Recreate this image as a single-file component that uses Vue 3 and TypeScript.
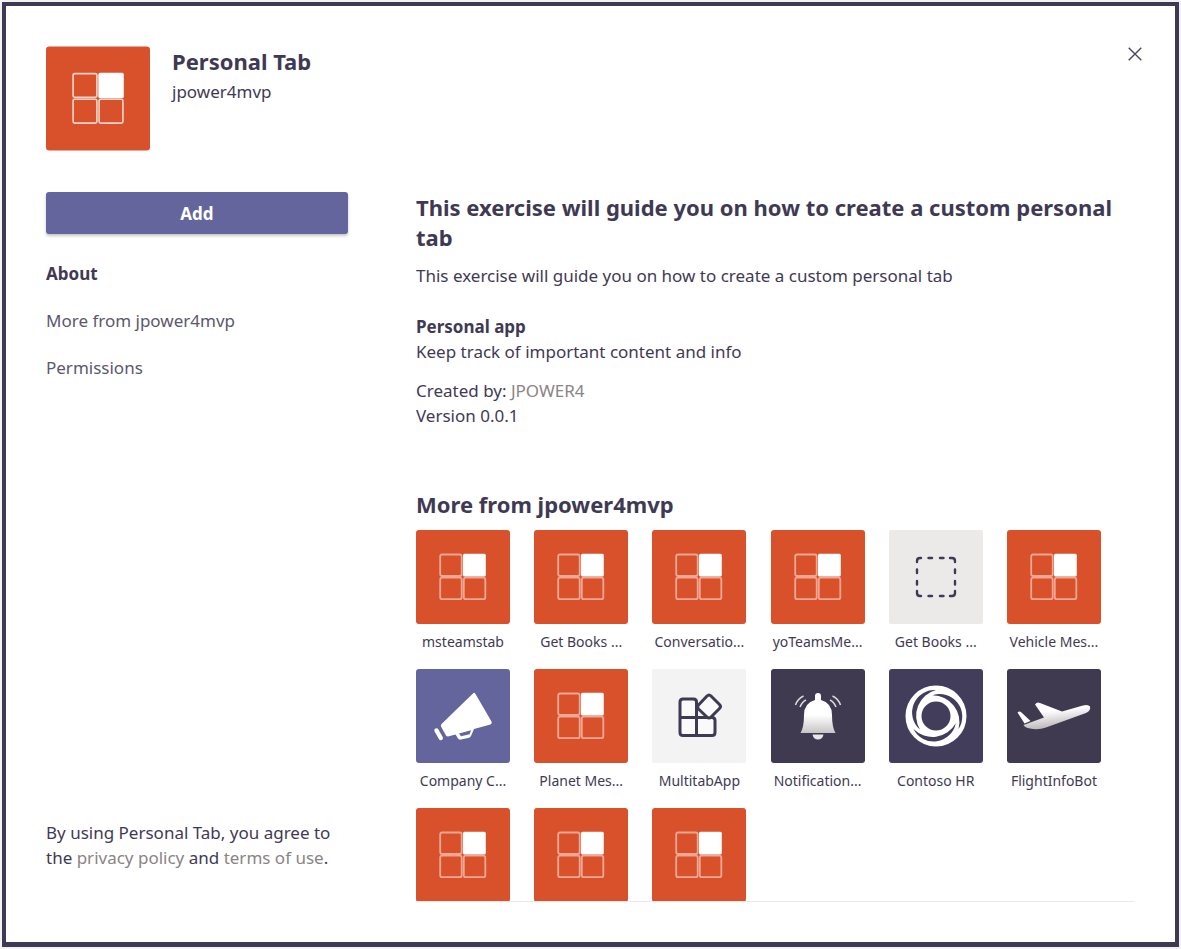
<script setup lang="ts">
type IconKind = 'tab' | 'dashed' | 'megaphone' | 'multitab' | 'bell' | 'contoso' | 'plane'

interface AppTile {
  name?: string
  icon: IconKind
}

const sections: string[] = ['About', 'More from jpower4mvp', 'Permissions']

const apps: AppTile[] = [
  { name: 'msteamstab', icon: 'tab' },
  { name: 'Get Books ...', icon: 'tab' },
  { name: 'Conversatio...', icon: 'tab' },
  { name: 'yoTeamsMe...', icon: 'tab' },
  { name: 'Get Books ...', icon: 'dashed' },
  { name: 'Vehicle Mes...', icon: 'tab' },
  { name: 'Company C...', icon: 'megaphone' },
  { name: 'Planet Mes...', icon: 'tab' },
  { name: 'MultitabApp', icon: 'multitab' },
  { name: 'Notification...', icon: 'bell' },
  { name: 'Contoso HR', icon: 'contoso' },
  { name: 'FlightInfoBot', icon: 'plane' },
  { icon: 'tab' },
  { icon: 'tab' },
  { icon: 'tab' },
]
</script>

<template>
  <main class="dialog">
    <header class="head">
      <svg class="logo" viewBox="0 0 94 94" aria-hidden="true">
        <rect width="94" height="94" rx="3" fill="#d9512a" />
        <g fill="none" stroke="#f6d3c9" stroke-width="1.5">
          <rect x="24.5" y="24.5" width="21.5" height="21.5" rx="1.5" />
          <rect x="24.5" y="47.7" width="21.5" height="21.5" rx="1.5" />
          <rect x="48" y="47.7" width="21.5" height="21.5" rx="1.5" />
        </g>
        <rect x="47.3" y="23.8" width="23" height="23" rx="1.5" fill="#fff" />
      </svg>
      <div class="title">
        <h1>Personal Tab</h1>
        <p>jpower4mvp</p>
      </div>
      <button class="close" type="button" aria-label="Close">
        <svg viewBox="0 0 14 14"><path d="M.7.7 13.3 13.3M13.3.7.7 13.3" fill="none" stroke="#4b4660" stroke-width="1.4" /></svg>
      </button>
    </header>

    <div class="body">
      <aside class="side">
        <button class="add" type="button">Add</button>
        <nav>
          <a v-for="(s, i) in sections" :key="s" href="#" :class="{ active: i === 0 }">{{ s }}</a>
        </nav>
        <p class="legal">
          By using Personal Tab, you agree to the <a href="#">privacy policy</a> and <a href="#">terms of use</a>.
        </p>
      </aside>

      <section class="content">
        <h2>This exercise will guide you on how to create a custom personal tab</h2>
        <p class="intro">This exercise will guide you on how to create a custom personal tab</p>
        <h3>Personal app</h3>
        <p>Keep track of important content and info</p>
        <p class="meta">Created by: <a href="#">JPOWER4</a></p>
        <p>Version 0.0.1</p>
        <h2 class="more">More from jpower4mvp</h2>
        <ul class="grid">
          <li v-for="(app, i) in apps" :key="i">
            <svg class="tile" viewBox="0 0 94 94" aria-hidden="true">
              <template v-if="app.icon === 'tab'">
                <rect width="94" height="94" rx="3" fill="#d9512a" />
                <g fill="none" stroke="#f0a896" stroke-width="1.8">
                  <rect x="24.2" y="24.5" width="21.5" height="21.5" rx="2" />
                  <rect x="24.2" y="47.7" width="21.5" height="21.5" rx="2" />
                  <rect x="47.8" y="47.7" width="21.5" height="21.5" rx="2" />
                </g>
                <rect x="47" y="23.8" width="22.8" height="22.8" rx="1.5" fill="#fff" />
              </template>
              <template v-else-if="app.icon === 'dashed'">
                <rect width="94" height="94" rx="2" fill="#ebeae9" />
                <g fill="none" stroke="#3f3a54" stroke-width="2.4" stroke-linecap="round">
                  <path d="M28 32v-1q0-3 3-3h1M61 28h2q3 0 3 3v1M66 61v2q0 3-3 3h-2M32 66h-1q-3 0-3-3v-2" />
                  <path d="M39.5 28h3.5M51 28h3.5M39.5 66h3.5M51 66h3.5M28 39.5v3.5M28 51v3.5M66 39.5v3.5M66 51v3.5" />
                </g>
              </template>
              <template v-else-if="app.icon === 'megaphone'">
                <rect width="94" height="94" rx="3" fill="#64659c" />
                <path d="M57.5 24q1-1 2 1L75.5 52.5q1 2-1 3L58 60l-3 7q-1 2-3 2l-7 1.500q-2 .5-3-1l-2.500-4-7.500 2q-1.500 0-2-1l-5-9q-.5-1.500.5-2.500z" fill="#fff" />
                <path d="m43 64.500 12-3.200-1.500 4-8.500 2z" fill="#64659c" />
                <path d="m20.500 61.500 4.300 7.500" stroke="#fff" stroke-width="4.400" stroke-linecap="round" />
              </template>
              <template v-else-if="app.icon === 'multitab'">
                <rect width="94" height="94" rx="2" fill="#f4f3f3" />
                <g fill="#fafafa" stroke="#3f3a54" stroke-width="3" stroke-linejoin="round">
                  <path d="M44.5 48.5V33q0-3-3-3H31q-3 0-3 3v30.500q0 3 3 3h29q3 0 3-3v-12q0-3-3-3H28M44.5 48.5v18" />
                  <path d="m46.500 36 8.500-9q2-2 4 0l8.500 8.500q2 2 0 4L59 48q-2 2-4 0l-8.500-8q-2-2 0-4z" />
                </g>
              </template>
              <template v-else-if="app.icon === 'bell'">
                <defs>
                  <linearGradient id="bell-shade" x1="0" y1="0" x2="0" y2="1">
                    <stop offset=".55" stop-color="#fff" />
                    <stop offset="1" stop-color="#c9c3c4" />
                  </linearGradient>
                </defs>
                <rect width="94" height="94" rx="3" fill="#3f3a50" />
                <path d="M44 31v-4q0-3 3-3t3 3v4q11 3 11 15 0 12 3.500 18h-35Q33 58 33 46q0-12 11-15z" fill="url(#bell-shade)" />
                <path d="M41.500 65.500h11q-1 5-5.500 5t-5.500-5z" fill="#e8e6e8" />
                <path d="M24.500 36q2-6 8-9M29 38q2-5 6-7M69.500 36q-2-6-8-9M65 38q-2-5-6-7" fill="none" stroke="#dcdae0" stroke-width="1.500" />
              </template>
              <template v-else-if="app.icon === 'contoso'">
                <rect width="94" height="94" rx="3" fill="#413d5a" />
                <circle cx="47" cy="47" r="22.5" fill="none" stroke="#fff" stroke-width="16" />
                <path
                  v-for="a in [0, 120, 240]"
                  :key="a"
                  :transform="`rotate(${a} 47 47)`"
                  d="M47 21A22.5 22.5 0 0 0 30.9 60.5 26.7 26.7 0 0 1 47 21z"
                  fill="#413d5a"
                />
              </template>
              <template v-else>
                <defs>
                  <linearGradient id="plane-shade" x1="0" y1="0" x2=".3" y2="1">
                    <stop offset=".4" stop-color="#fff" />
                    <stop offset="1" stop-color="#bcb5b4" />
                  </linearGradient>
                </defs>
                <rect width="94" height="94" rx="3" fill="#3f3a50" />
                <path d="M10.500 43.500q2-2 4 0L23.500 52l-6 2.500z" fill="#fff" />
                <path d="M28 35.500q2-3 5-1.500l22 8.500L76 36.500q5-1.500 7 1 1 4-4 6.500L39 58.500q-8 3-16 1-5-1-6.500-3.500L37 48.500z" fill="url(#plane-shade)" />
              </template>
            </svg>
            <span v-if="app.name">{{ app.name }}</span>
          </li>
        </ul>
      </section>
    </div>
  </main>
</template>

<style>
body {
  margin: 0;
  background: #f3f2f1;
}
</style>

<style scoped>
* {
  box-sizing: border-box;
}
h1, h2, h3, p, ul {
  margin: 0;
  padding: 0;
}
a {
  color: #8a8484;
  text-decoration: none;
}
button {
  border: 0;
  padding: 0;
  font: inherit;
  cursor: pointer;
}
.dialog {
  display: flex;
  flex-direction: column;
  height: calc(100vh - 4px);
  margin: 2px;
  padding: 40px 33px 40px 40px;
  border: 4px solid #3f3a54;
  border-bottom-width: 5px;
  background: #fff;
  color: #3f3a54;
  font: 17px/25px "Noto Sans", "Open Sans", sans-serif;
}
.head {
  display: flex;
  align-items: flex-start;
  gap: 22px;
  margin-bottom: 41px;
}
.logo {
  width: 104px;
  height: 105px;
}
.title {
  flex: 1;
}
.title p {
  margin-top: 3px;
}
h1, h2 {
  font-size: 22px;
  line-height: 30px;
  font-weight: 700;
}
.close {
  width: 14px;
  height: 14px;
  margin-top: 1px;
  background: none;
}
.close svg {
  display: block;
}
.body {
  display: flex;
  flex: 1;
  gap: 68px;
  min-height: 0;
}
.side {
  display: flex;
  flex: 0 0 302px;
  flex-direction: column;
}
.add {
  height: 42px;
  border-radius: 3px;
  background: #64659c;
  box-shadow: 0 2px 3px #c8c4c4;
  color: #fff;
  font-weight: 700;
}
nav {
  display: flex;
  flex-direction: column;
  gap: 22px;
  margin-top: 27px;
}
nav a {
  color: #5c586c;
}
nav .active {
  color: #3f3a54;
  font-weight: 700;
}
.legal {
  margin-top: auto;
  padding-bottom: 32px;
}
.content {
  flex: 1;
  min-width: 0;
  margin-right: 8px;
  overflow: hidden;
  border-bottom: 1px solid #e8e8e8;
}
.intro {
  margin: 11px 0 26px;
}
h3 {
  font-size: 17px;
  line-height: 25px;
  font-weight: 700;
}
.meta {
  margin-top: 14px;
}
.more {
  margin-top: 61px;
}
.grid {
  display: grid;
  grid-template-columns: repeat(6, 94px);
  justify-content: space-between;
  row-gap: 15px;
  margin-top: 11px;
  padding-right: 33px;
  list-style: none;
}
li {
  display: flex;
  flex-direction: column;
  align-items: center;
  gap: 6px;
}
.tile {
  width: 94px;
  height: 94px;
}
li span {
  font-size: 14px;
  line-height: 24px;
  white-space: nowrap;
}
</style>
